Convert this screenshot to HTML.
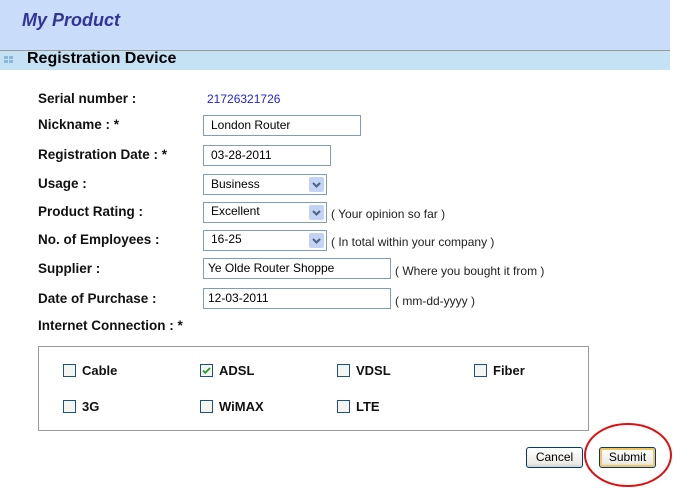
<!DOCTYPE html>
<html><head><style>
body{margin:0;width:680px;height:487px;background:#fff;font-family:"Liberation Sans",Arial,sans-serif;position:relative;overflow:hidden}
.a{position:absolute}
.hdr{left:0;top:0;width:670px;height:50px;background:#c9ddfa}
.line{left:0;top:50px;width:670px;height:1px;background:#9a9a9a}
.bar{left:0;top:51px;width:670px;height:19px;background:#c4e2f4}
.lbl{font-size:13.5px;font-weight:bold;color:#111;left:38px}
.inp{border:1px solid #7f9db9;background:#fff;font-size:12px;color:#000;box-sizing:border-box;padding:2px 0 0 7px;height:21px}
.sel .arr{position:absolute;right:2px;top:2px;width:15px;height:15px;background:#c3d3f5;border-radius:2px;text-align:center}
.hint{font-size:12px;color:#222}
.cb{width:11px;height:11px;border:1px solid #1c5180;background:#f4f4f0}
.cl{font-size:13px;font-weight:bold;color:#111}
.btn{height:21px;border:1px solid #003c74;border-radius:3px;background:linear-gradient(#fff,#ecebe6 80%,#d6d0c5);font-size:12px;text-align:center;line-height:19px;box-sizing:border-box}
</style></head><body>
<div class="a hdr"></div>
<div class="a" style="left:22px;top:10px;font-size:18px;font-weight:bold;font-style:italic;color:#333399">My Product</div>
<div class="a line"></div>
<div class="a bar"></div>
<div class="a" style="left:4px;top:56px;width:4px;height:3px;background:#8ab8da"></div>
<div class="a" style="left:9px;top:56px;width:4px;height:3px;background:#8ab8da"></div>
<div class="a" style="left:4px;top:60px;width:4px;height:3px;background:#8ab8da"></div>
<div class="a" style="left:9px;top:60px;width:4px;height:3px;background:#8ab8da"></div>
<div class="a" style="left:27px;top:50px;font-size:16px;font-weight:bold;color:#000">Registration Device</div>

<div class="a lbl" style="top:91px">Serial number :</div>
<div class="a" style="left:207px;top:92px;font-size:12px;color:#2222dd">21726321726</div>
<div class="a lbl" style="top:117px">Nickname : *</div>
<div class="a inp" style="left:203px;top:115px;width:158px">London Router</div>
<div class="a lbl" style="top:147px">Registration Date : *</div>
<div class="a inp" style="left:203px;top:145px;width:128px">03-28-2011</div>
<div class="a lbl" style="top:176px">Usage :</div>
<div class="a inp sel" style="left:203px;top:174px;width:124px">Business<div class="arr"><svg width="9" height="15" viewBox="0 0 9 15"><path d="M1 6l3.5 3.5L8 6" stroke="#4d6185" stroke-width="2" fill="none"/></svg></div></div>
<div class="a lbl" style="top:204px">Product Rating :</div>
<div class="a inp sel" style="left:203px;top:202px;width:124px;padding-top:1px">Excellent<div class="arr"><svg width="9" height="15" viewBox="0 0 9 15"><path d="M1 6l3.5 3.5L8 6" stroke="#4d6185" stroke-width="2" fill="none"/></svg></div></div>
<div class="a hint" style="left:331px;top:207px">( Your opinion so far )</div>
<div class="a lbl" style="top:232px">No. of Employees :</div>
<div class="a inp sel" style="left:203px;top:230px;width:124px;padding-top:1px">16-25<div class="arr"><svg width="9" height="15" viewBox="0 0 9 15"><path d="M1 6l3.5 3.5L8 6" stroke="#4d6185" stroke-width="2" fill="none"/></svg></div></div>
<div class="a hint" style="left:331px;top:235px">( In total within your company )</div>
<div class="a lbl" style="top:261px">Supplier :</div>
<div class="a inp" style="left:203px;top:258px;width:188px;padding-left:4px">Ye Olde Router Shoppe</div>
<div class="a hint" style="left:395px;top:264px">( Where you bought it from )</div>
<div class="a lbl" style="top:291px">Date of Purchase :</div>
<div class="a inp" style="left:203px;top:288px;width:188px;padding-left:4px">12-03-2011</div>
<div class="a hint" style="left:395px;top:294px">( mm-dd-yyyy )</div>
<div class="a lbl" style="top:318px">Internet Connection : *</div>

<div class="a" style="left:38px;top:346px;width:549px;height:83px;border:1px solid #999"></div>
<div class="a cb" style="left:63px;top:364px"></div><div class="a cl" style="left:82px;top:363px">Cable</div>
<div class="a cb" style="left:200px;top:364px"><svg width="11" height="11" viewBox="0 0 11 11" style="position:absolute;left:0;top:0"><path d="M2 5.5l2.3 2.3L9 3" stroke="#21a121" stroke-width="1.8" fill="none"/></svg></div><div class="a cl" style="left:219px;top:363px">ADSL</div>
<div class="a cb" style="left:337px;top:364px"></div><div class="a cl" style="left:356px;top:363px">VDSL</div>
<div class="a cb" style="left:474px;top:364px"></div><div class="a cl" style="left:493px;top:363px">Fiber</div>
<div class="a cb" style="left:63px;top:400px"></div><div class="a cl" style="left:82px;top:399px">3G</div>
<div class="a cb" style="left:200px;top:400px"></div><div class="a cl" style="left:219px;top:399px">WiMAX</div>
<div class="a cb" style="left:337px;top:400px"></div><div class="a cl" style="left:356px;top:399px">LTE</div>

<div class="a btn" style="left:526px;top:447px;width:57px">Cancel</div>
<div class="a btn" style="left:599px;top:447px;width:57px;box-shadow:inset 0 0 0 2px #f5c45c">Submit</div>
<svg class="a" style="left:580px;top:418px" width="100" height="70"><ellipse cx="48" cy="37" rx="43" ry="31" fill="none" stroke="#e01010" stroke-width="2"/></svg>
</body></html>
